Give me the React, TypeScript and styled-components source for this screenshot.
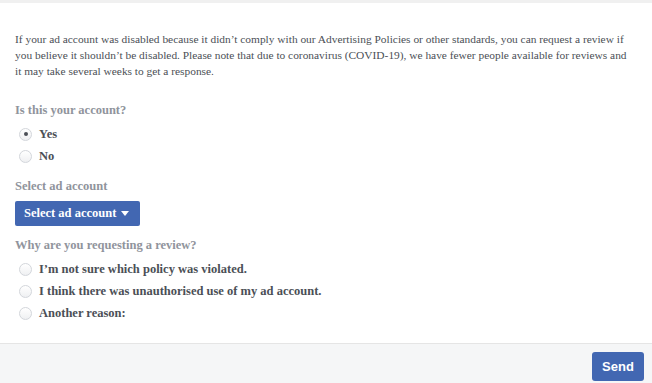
import React from "react";
import styled, { createGlobalStyle } from "styled-components";

const Global = createGlobalStyle`
  html, body { margin: 0; padding: 0; background: #fff; }
  body { width: 652px; height: 383px; overflow: hidden; }
`;

const Page = styled.div`
  width: 652px;
  height: 383px;
  display: flex;
  flex-direction: column;
  background: #fff;
  font-family: "Liberation Serif", "Times New Roman", serif;
`;

const TopStrip = styled.div`
  height: 3px;
  background: #f0f0f0;
`;

const Body = styled.div`
  flex: 1;
  padding: 28px 15px 0 15px;
  display: flex;
  flex-direction: column;
`;

const Intro = styled.p`
  margin: 0;
  font-size: 11.4px;
  line-height: 16px;
  color: #4b4f56;
  white-space: nowrap;
`;

const SectionLabel = styled.div<{ $top: number }>`
  margin-top: ${(p) => p.$top}px;
  font-size: 12.5px;
  line-height: 16px;
  font-weight: bold;
  color: #90949c;
`;

const Options = styled.div<{ $top: number }>`
  margin-top: ${(p) => p.$top}px;
  display: flex;
  flex-direction: column;
  gap: 6px;
  padding-left: 4px;
`;

const Option = styled.label`
  display: flex;
  align-items: center;
  gap: 7px;
  height: 16px;
  font-size: 12.5px;
  font-weight: bold;
  color: #4b4f56;
`;

const Radio = styled.span<{ $checked?: boolean }>`
  width: 13px;
  height: 13px;
  box-sizing: border-box;
  border-radius: 50%;
  border: 1px solid #d3d6db;
  background: linear-gradient(#ffffff, #eff0f2);
  display: flex;
  align-items: center;
  justify-content: center;
  &::after {
    content: "";
    width: 4px;
    height: 4px;
    border-radius: 50%;
    background: ${(p) => (p.$checked ? "#4b4f56" : "transparent")};
  }
`;

const DropButton = styled.button`
  margin-top: 7px;
  align-self: flex-start;
  height: 25px;
  width: 125px;
  box-sizing: border-box;
  padding: 0 9px;
  border: none;
  border-radius: 2px;
  background: #4267b2;
  color: #fff;
  font-family: "Liberation Serif", "Times New Roman", serif;
  font-size: 12.5px;
  font-weight: bold;
  display: flex;
  align-items: center;
  gap: 5px;
  white-space: nowrap;
`;

const Caret = styled.span`
  width: 0;
  height: 0;
  border-left: 4px solid transparent;
  border-right: 4px solid transparent;
  border-top: 5px solid #fff;
`;

const Footer = styled.div`
  height: 40px;
  border-top: 1px solid #e5e5e5;
  background: #f5f6f7;
  display: flex;
  justify-content: flex-end;
  align-items: flex-start;
  padding: 8px 8px 0 0;
  box-sizing: border-box;
`;

const SendButton = styled.button`
  width: 52px;
  height: 29px;
  border: none;
  border-radius: 3px;
  background: #4267b2;
  color: #fff;
  font-family: "Liberation Sans", Arial, sans-serif;
  font-size: 13px;
  font-weight: bold;
`;

export default function App() {
  return (
    <Page>
      <Global />
      <TopStrip />
      <Body>
        <Intro>
          If your ad account was disabled because it didn’t comply with our Advertising Policies or other
          standards, you can request a review if
          <br />
          you believe it shouldn’t be disabled. Please note that due to coronavirus (COVID-19), we have fewer
          people available for reviews and
          <br />
          it may take several weeks to get a response.
        </Intro>
        <SectionLabel $top={23}>Is this your account?</SectionLabel>
        <Options $top={8}>
          <Option>
            <Radio $checked />
            Yes
          </Option>
          <Option>
            <Radio />
            No
          </Option>
        </Options>
        <SectionLabel $top={14}>Select ad account</SectionLabel>
        <DropButton>
          Select ad account <Caret />
        </DropButton>
        <SectionLabel $top={11}>Why are you requesting a review?</SectionLabel>
        <Options $top={8}>
          <Option>
            <Radio />
            I’m not sure which policy was violated.
          </Option>
          <Option>
            <Radio />
            I think there was unauthorised use of my ad account.
          </Option>
          <Option>
            <Radio />
            Another reason:
          </Option>
        </Options>
      </Body>
      <Footer>
        <SendButton>Send</SendButton>
      </Footer>
    </Page>
  );
}
